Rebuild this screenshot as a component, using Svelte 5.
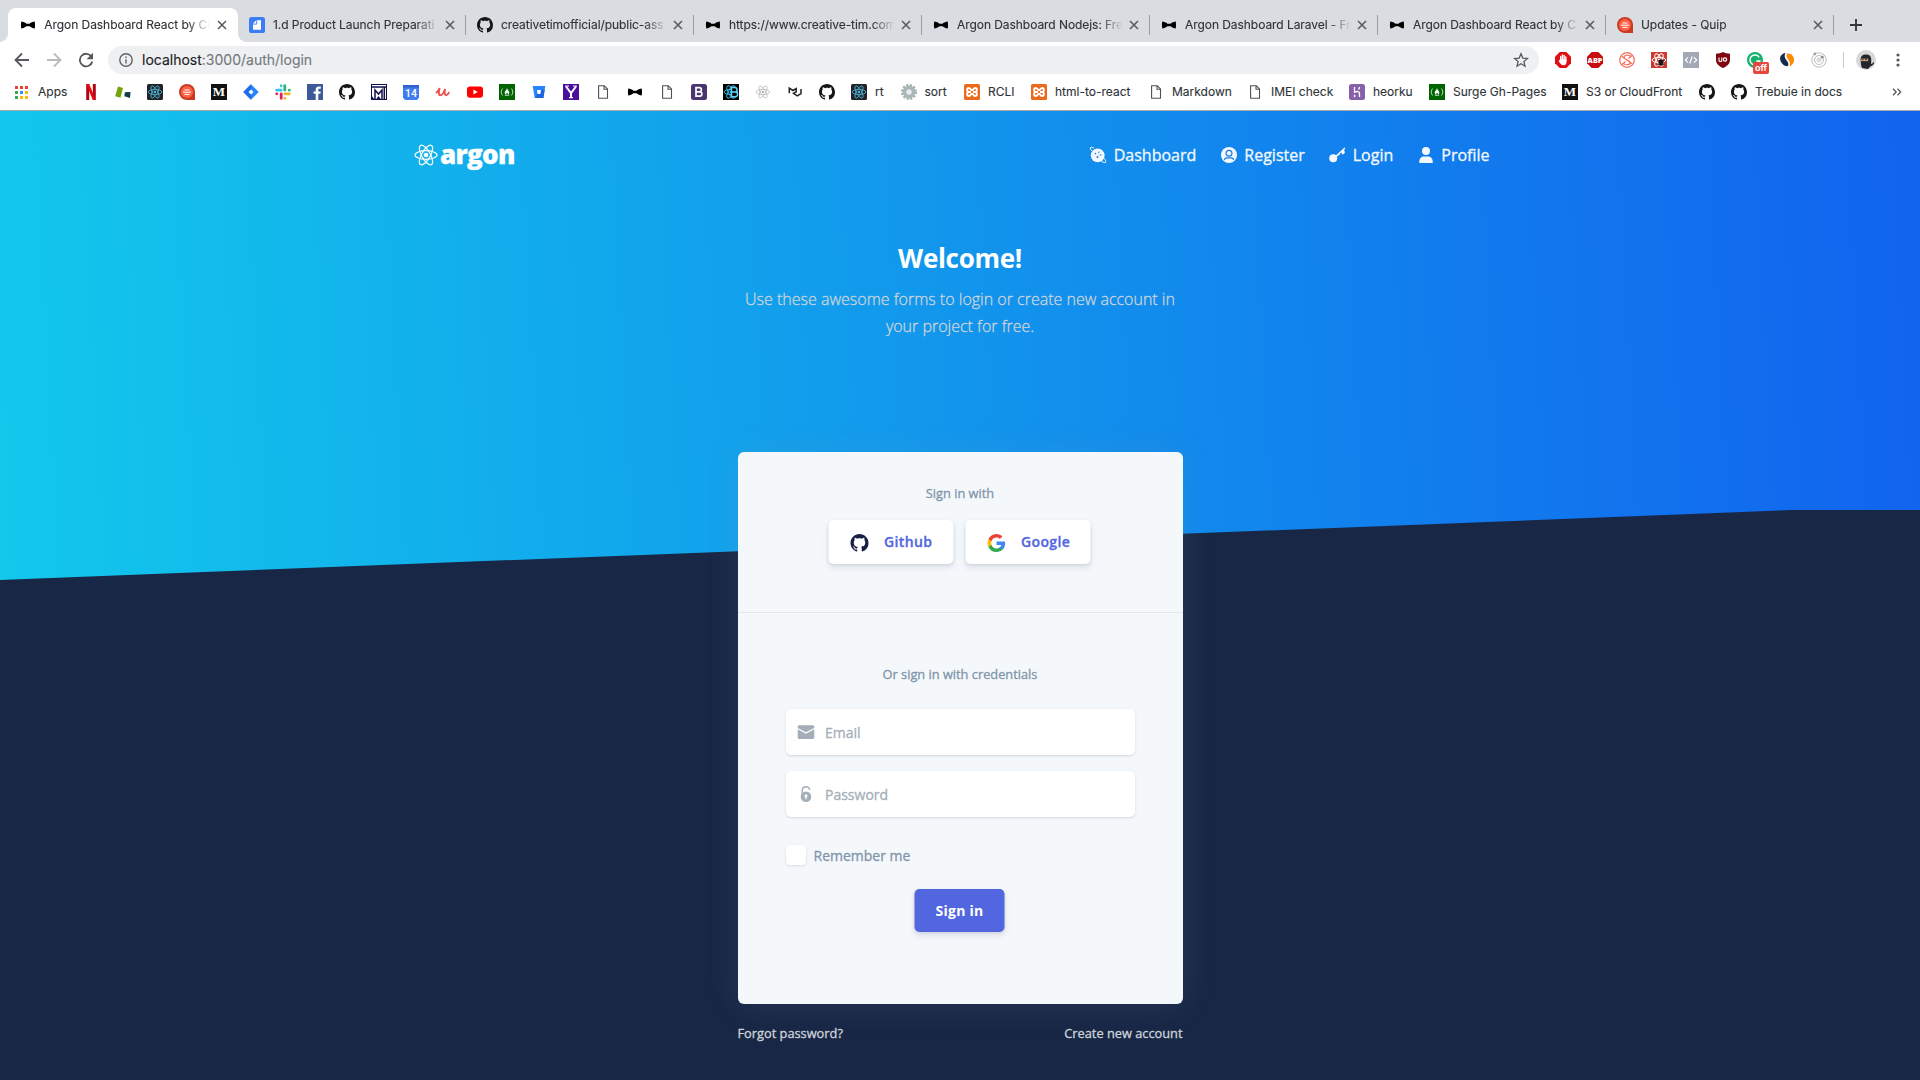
<script>
  const tabs = [
    { icon: 'bow', title: 'Argon Dashboard React by Cr', active: true },
    { icon: 'note', title: '1.d Product Launch Preparati' },
    { icon: 'github', title: 'creativetimofficial/public-ass' },
    { icon: 'bow', title: 'https://www.creative-tim.com' },
    { icon: 'bow', title: 'Argon Dashboard Nodejs: Fre' },
    { icon: 'bow', title: 'Argon Dashboard Laravel - Fr' },
    { icon: 'bow', title: 'Argon Dashboard React by C' },
    { icon: 'quip', title: 'Updates - Quip' }
  ];

  // w is the distance to the next bookmark's icon
  const bookmarks = [
    { icon: 'netflix', w: 32 }, { icon: 'shapes', w: 32 }, { icon: 'react', w: 32 },
    { icon: 'quip', w: 32 }, { icon: 'medium', w: 32 }, { icon: 'jira', w: 32 },
    { icon: 'slack', w: 32 }, { icon: 'facebook', w: 32 }, { icon: 'github', w: 32 },
    { icon: 'mi', w: 32 }, { icon: 'calendar', w: 32 }, { icon: 'udemy', w: 32 },
    { icon: 'youtube', w: 32 }, { icon: 'fcc', w: 32 }, { icon: 'bitbucket', w: 32 },
    { icon: 'yahoo', w: 32 }, { icon: 'page', w: 32 }, { icon: 'bow', w: 32 },
    { icon: 'page', w: 32 }, { icon: 'bootstrap', w: 32 }, { icon: 'reactb', w: 32 },
    { icon: 'reactgray', w: 32 }, { icon: 'mu', w: 32 }, { icon: 'github', w: 32 },
    { icon: 'react', w: 49.5, label: 'rt' }, { icon: 'gear', w: 63.5, label: 'sort' },
    { icon: 'xampp', w: 67, label: 'RCLI' }, { icon: 'xampp', w: 117, label: 'html-to-react' },
    { icon: 'page', w: 99, label: 'Markdown' }, { icon: 'page', w: 102, label: 'IMEI check' },
    { icon: 'heroku', w: 80, label: 'heorku' }, { icon: 'fcc', w: 133, label: 'Surge Gh-Pages' },
    { icon: 'medium', w: 137, label: 'S3 or CloudFront' }, { icon: 'github', w: 32 },
    { icon: 'github', w: 110, label: 'Trebuie in docs' }
  ];

  const extensions = ['hand', 'abp', 'sketch', 'reactbug', 'code', 'ublock', 'grammar', 'swirl', 'orbit'];
  const links = [
    { icon: 'planet', label: 'Dashboard' },
    { icon: 'usercircle', label: 'Register' },
    { icon: 'key', label: 'Login' },
    { icon: 'user', label: 'Profile' }
  ];
  const appColors = ['#ea4335', '#ea4335', '#ea4335', '#34a853', '#4285f4', '#fbbc05', '#34a853', '#fbbc05', '#fbbc05'];
</script>

{#snippet atom(color, width)}
  <g fill="none" stroke={color} stroke-width={width}>
    <ellipse cx="8" cy="8" rx="6.8" ry="2.6" />
    <ellipse cx="8" cy="8" rx="6.8" ry="2.6" transform="rotate(60 8 8)" />
    <ellipse cx="8" cy="8" rx="6.8" ry="2.6" transform="rotate(120 8 8)" />
  </g>
  <circle cx="8" cy="8" r="1.3" fill={color} />
{/snippet}

{#snippet icon(name)}
  <svg class="ico" viewBox="0 0 16 16" aria-hidden="true">
    {#if name === 'bow'}
      <path d="M1.2 4.6c2 .1 3.800 1 5.300 2.200h3c1.500-1.200 3.300-2.100 5.300-2.200.3 2.200.3 4.700 0 6.900-2-.2-3.800-1-5.300-2.200h-3C5 10.500 3.200 11.300 1.200 11.500c-.4-2.200-.4-4.700 0-6.900z" fill="#000" />
    {:else if name === 'note'}
      <rect width="16" height="16" rx="2.6" fill="#3b7df4" />
      <path d="M4 6.500 7.300 3.200H12V12.800H4z" fill="#fff" /><path d="M4 7.100h3.700V3.200" fill="none" stroke="#3b7df4" stroke-width=".9" />
    {:else if name === 'github'}
      <path fill="currentColor" d="M8 0C3.58 0 0 3.58 0 8c0 3.54 2.29 6.53 5.47 7.59.4.07.55-.17.55-.38 0-.19-.01-.82-.01-1.49-2.01.37-2.53-.49-2.69-.94-.09-.23-.48-.94-.82-1.13-.28-.15-.68-.52-.01-.53.63-.01 1.08.58 1.23.82.72 1.21 1.87.87 2.33.66.07-.52.28-.87.51-1.07-1.78-.2-3.64-.89-3.64-3.95 0-.87.31-1.59.82-2.15-.08-.2-.36-1.02.08-2.12 0 0 .67-.21 2.2.82.64-.18 1.32-.27 2-.27.68 0 1.36.09 2 .27 1.53-1.04 2.2-.82 2.2-.82.44 1.1.16 1.92.08 2.12.51.56.82 1.27.82 2.15 0 3.07-1.87 3.75-3.65 3.95.29.25.54.73.54 1.48 0 1.07-.01 1.93-.01 2.2 0 .21.15.46.55.38A8.013 8.013 0 0016 8c0-4.42-3.58-8-8-8z" />
    {:else if name === 'quip'}
      <path d="M8 0a8 8 0 0 1 8 8v8H8A8 8 0 0 1 8 0z" fill="#c93a20" /><circle cx="8" cy="8" r="6" fill="#ff6347" />
      <path d="M5.500 6h5M4 8.200h8M5.500 10.400h5" stroke="#fff" stroke-width="1" />
    {:else if name === 'netflix'}
      <path d="M3.200 0h3v16h-3zM9.800 0h3v16h-3z" fill="#b1060f" /><path d="M3.200 0h3l6.600 16h-3z" fill="#e50914" />
    {:else if name === 'shapes'}
      <path d="M3 2.500 8 4 5.500 13.800.2 12.200z" fill="#76a30d" /><path d="m9.800 8.200 5.700-.3-.5 6-5.600-1.700z" fill="#0f3c46" />
    {:else if name === 'react'}
      <rect width="16" height="16" rx="1.500" fill="#20232a" />{@render atom('#4fb9d4', 0.8)}
    {:else if name === 'reactb'}
      <rect width="16" height="16" fill="#000" />{@render atom('#38b6df', 1)}
      <path d="M8.500 3.500h3.300a2.200 2.200 0 0 1 0 4.500H8.500zm0 4.500h3.800a2.300 2.300 0 0 1 0 4.700H8.500z" fill="#000" stroke="#5fd3f7" stroke-width="1.500" />
    {:else if name === 'reactgray'}
      {@render atom('#b5b5b5', 0.7)}
    {:else if name === 'medium'}
      <rect width="16" height="16" fill="#111" />
      <text x="8" y="12.400" text-anchor="middle" font-family="Liberation Serif, serif" font-size="13" font-weight="700" fill="#fff">M</text>
    {:else if name === 'jira'}
      <path d="M8 .3 15.700 8 8 15.700.3 8z" fill="#2684ff" /><path d="M8 .3v5L5.300 8 8 10.700v5L.3 8z" fill="#1f6bea" /><path d="M8 5.500 10.500 8 8 10.500 5.500 8z" fill="#fff" />
    {:else if name === 'slack'}
      <g stroke-width="2.800" stroke-linecap="round">
        <path d="M6.200 1.700v.1M1.700 6.200h4.500" stroke="#36c5f0" /><path d="M9.800 1.700v4.500M14.300 6.200h.1" stroke="#2eb67d" />
        <path d="M9.800 9.800h4.500M9.800 14.300v.1" stroke="#ecb22e" /><path d="M6.200 9.800v4.500M1.700 9.800h.1" stroke="#e01e5a" />
      </g>
    {:else if name === 'facebook'}
      <rect width="16" height="16" fill="#3c5a99" /><path d="M8.700 16V9.800H6.600V7.400h2.100V5.700c0-2.100 1.300-3.200 3.200-3.200.9 0 1.600.1 1.900.1v2.200h-1.300c-1 0-1.200.5-1.200 1.200v1.400h2.400L13.400 9.800h-2.100V16z" fill="#fff" />
    {:else if name === 'mi'}
      <rect x=".5" y=".5" width="15" height="15" fill="#fff" stroke="#111149" /><path d="M0 3h16M4 15V6l3.500 4L11 6v9M13.300 3v13" fill="none" stroke="#10104d" stroke-width="1.500" /><path d="M0 11l4 5H0zM4.500 16l3-4 3 4z" fill="#10104d" />
    {:else if name === 'calendar'}
      <path d="M0 1h16v12.500L14 16H2L0 13.500z" fill="#3f7cf0" /><path d="M0 1h16v2.500H0z" fill="#2f63ca" />
      <text x="8" y="13" text-anchor="middle" font-family="Roboto, sans-serif" font-size="10.500" font-weight="500" fill="#fff">14</text>
    {:else if name === 'udemy'}
      <path d="M1.500 8.500C3 7 4 5.500 4.600 4c-.8 3.500-1.400 7.300.5 7.300 2.100 0 4-3.300 4.900-6.300-.5 3.500-.5 6.300 1.200 6.300 1.200 0 2-1.200 2.600-2.600" fill="none" stroke="#ec5252" stroke-width="1.900" stroke-linecap="round" />
    {:else if name === 'youtube'}
      <rect y="2.500" width="16" height="11.300" rx="3" fill="#f00" /><path d="m6.400 5.600 4.300 2.500-4.300 2.500z" fill="#fff" />
    {:else if name === 'fcc'}
      <rect width="16" height="16" fill="#006400" /><path d="M3.600 4.500c-1.800 2-1.800 5 0 7M12.400 4.500c1.800 2 1.800 5 0 7M5.800 11.300h4.400" fill="none" stroke="#cfe3cf" stroke-width=".9" /><path d="M8 4c.3 2 2.300 2.800 2.300 4.800 0 1-.6 1.800-1.300 2 .3-.9-.2-1.400-.8-2-.9.500-1.100 1.200-.8 2-1-.3-1.700-1-1.700-2.200C5.700 6.900 7.700 6.300 8 4z" fill="#fff" />
    {:else if name === 'bitbucket'}
      <path d="M1.700 2h12.600l-1.900 12H3.700z" fill="#2684ff" /><path d="M10 6h3.700l-1.300 8H3.900L6.200 10z" fill="#1d66de" /><path d="M6 6h4l-.6 4H6.600z" fill="#fff" />
    {:else if name === 'yahoo'}
      <rect width="16" height="16" fill="#4b0d9c" /><path d="M3 2.500 8 9l5-6.500M8 9v4.500" fill="none" stroke="#fff" stroke-width="2" /><path d="M2 2h4M10 2h4M6 13.600h4" stroke="#fff" stroke-width="1.100" />
    {:else if name === 'page'}
      <path d="M3.600 1.700h5.700l3.200 3.200v9.400H3.600zM9 1.700v3.500h3.500" fill="none" stroke="#4d5156" stroke-width="1.100" />
    {:else if name === 'bootstrap'}
      <rect width="16" height="16" rx="2.500" fill="#4b3470" /><path d="M5 3.700h3.300a2 2 0 0 1 0 4.100H5zm0 4.100h3.700a2.200 2.200 0 0 1 0 4.400H5z" fill="none" stroke="#fff" stroke-width="1.700" />
    {:else if name === 'mu'}
      <path d="M2.300 9.300V4.200l3.700 2.300 3.200-1.900v3.200L6.500 9.300l3.700 2.600 3.800-2.300V4.900" fill="none" stroke="#222" stroke-width="1.500" />
    {:else if name === 'gear'}
      <circle cx="8" cy="8" r="6.500" fill="none" stroke="#9fb0b2" stroke-width="3" stroke-dasharray="2 1.400" /><circle cx="8" cy="8" r="4.500" fill="none" stroke="#a9b7b8" stroke-width="3.800" /><circle cx="8" cy="8" r="2.200" fill="#e8eded" />
    {:else if name === 'xampp'}
      <rect width="16" height="16" rx="1.500" fill="#ec6a1c" /><path d="M7 8H5C2.700 8 2.500 3.900 4.700 3.900c2 0 1.500 2.300 3.300 2.300s1.300-2.300 3.300-2.300C13.500 3.900 13.300 8 11 8H9m2 0c2.300 0 2.500 4.100.3 4.100-2 0-1.500-2.300-3.300-2.300s-1.300 2.300-3.300 2.300C2.500 12.100 2.700 8 5 8" fill="none" stroke="#fff" stroke-width="2" />
    {:else if name === 'heroku'}
      <rect width="16" height="16" rx="2.500" fill="#8660a9" /><path d="M5.500 3v5.200c3-1.200 5-.9 5 1.300V13M10.500 3c0 .9-.3 1.700-1 2.500" fill="none" stroke="#fff" stroke-width="1.300" /><path d="m4.900 10.300 2 1.600-2 1.600z" fill="#fff" />
    {:else if name === 'hand'}
      <path d="M4.700 0h6.600L16 4.700v6.600L11.300 16H4.700L0 11.300V4.700z" fill="#e10f12" /><path d="M5.700 9V4.400M7.400 8V3M9.100 8V3.400M10.800 9V4.900" stroke="#fff" stroke-width="1.400" stroke-linecap="round" /><path d="M5 7.500h6.500V10c0 2.200-1.200 3.300-3 3.300-2.300 0-3.300-2-4.900-4.300z" fill="#fff" />
    {:else if name === 'abp'}
      <path d="M4.700 0h6.600L16 4.700v6.600L11.300 16H4.700L0 11.300V4.700z" fill="#c70d0d" />
      <text x="8" y="10.700" text-anchor="middle" font-family="Open Sans, sans-serif" font-size="7.300" font-weight="800" fill="#fff">ABP</text>
    {:else if name === 'sketch'}
      <circle cx="8" cy="8" r="7.300" fill="#fff" stroke="#f46a58" stroke-width="1.200" /><path d="M11.800 4.500C9.500 2.300 5 3 5 5.500 5 8 11.200 8 11.200 10.500c0 2.500-4.500 3-7 .9M2.600 4.300l10.800 7.600M13 3.500l-3.500 3M6.500 9.500l-3.300 3" fill="none" stroke="#f46a58" stroke-width="1.200" />
    {:else if name === 'reactbug'}
      <rect width="16" height="16" fill="#cb3a2f" />{@render atom('#fff', 1)}
      <ellipse cx="10" cy="10.500" rx="2.500" ry="3.200" fill="#221111" /><path d="M6.500 8l7 5M6.500 13l7-5" stroke="#221111" stroke-width=".8" />
    {:else if name === 'code'}
      <rect width="16" height="16" fill="#a2a9b5" /><path d="M5 5.300 2.300 8 5 10.700M11 5.300 13.700 8 11 10.700M9.200 4.500l-2.400 7" fill="none" stroke="#fff" stroke-width="1.200" />
    {:else if name === 'ublock'}
      <path d="M8 0c2 1.300 4.500 1.700 7 1.700V8c0 4-3.500 6.500-7 8-3.500-1.500-7-4-7-8V1.700C3.500 1.700 6 1.300 8 0z" fill="#800610" /><path d="M4 5.500v3c0 1.300 2.800 1.300 2.800 0v-3" fill="none" stroke="#fff" stroke-width="1.100" /><circle cx="10" cy="7.500" r="1.700" fill="none" stroke="#fff" stroke-width="1.200" />
    {:else if name === 'grammar'}
      <circle cx="8" cy="8" r="8" fill="#15b26b" /><path d="M12.200 5.300A5 5 0 1 0 12.800 9H9.300" fill="none" stroke="#fff" stroke-width="1.500" />
    {:else if name === 'swirl'}
      <path d="M6.500.8C.2 2.500-.7 8.200 4 12.500c1.500 1.400 3.800 1.900 5 1.500 1-2 0-3.800-1.200-5.200C5.500 6.200 5 3.500 6.500.8z" fill="#192b4c" /><path d="M8 1.500c4.500-.6 7.500 3 7 7-.3 2.800-2.300 5-4.400 5.700 1-2.700 0-5-1.500-7C7.700 5.500 7 3.500 8 1.500z" fill="#ff8a00" />
    {:else if name === 'orbit'}
      <g fill="none" stroke="#b9bbbe"><circle cx="8" cy="8" r="7.200" /><circle cx="8" cy="8" r="4.500" /></g><circle cx="8" cy="8" r="2.500" fill="#dadada" /><circle cx="11.200" cy="5" r="1.500" fill="#888" /><circle cx="3.800" cy="1.900" r="1.300" fill="#999" />
    {:else if name === 'google'}
      <path d="M15.700 8.200c0-.6-.1-1.100-.2-1.600H8v3.100h4.300a3.700 3.700 0 0 1-1.600 2.400v2h2.600c1.500-1.400 2.400-3.400 2.400-5.900z" fill="#4285f4" /><path d="M8 16c2.200 0 4-.7 5.300-1.900l-2.600-2c-.7.5-1.600.8-2.700.8-2.100 0-3.900-1.400-4.500-3.300H.9v2.100A8 8 0 0 0 8 16z" fill="#34a853" /><path d="M3.500 9.600a4.800 4.800 0 0 1 0-3.100V4.400H.9a8 8 0 0 0 0 7.200z" fill="#fbbc05" /><path d="M8 3.200c1.200 0 2.200.4 3 1.200l2.300-2.300A8 8 0 0 0 .9 4.400l2.600 2.100C4.100 4.600 5.900 3.200 8 3.200z" fill="#ea4335" />
    {:else if name === 'planet'}
      <circle cx="7.700" cy="8.300" r="6.900" fill="currentColor" /><path d="M4 1.200C2 0 .3-.1.300 1c0 .9.500 1.900 1.400 3M14 11.200c1.700 2 2.200 3.600 1.500 4.200-.7.500-2.400 0-4.200-1.200" fill="none" stroke="currentColor" stroke-width="1" />
      <g fill="#117fec"><circle cx="5.400" cy="6.600" r=".8" /><circle cx="8.800" cy="5.200" r=".7" /><circle cx="10.700" cy="8" r=".8" /><circle cx="7.500" cy="10" r="1" /><circle cx="8.300" cy="7.600" r=".4" /></g>
    {:else if name === 'usercircle'}
      <circle cx="8" cy="8" r="8" fill="currentColor" /><circle cx="8" cy="6.200" r="3.500" fill="#117bec" /><path d="M2.900 12.800c.3-1.800 1.800-2.500 3.100-2.500h4c1.300 0 2.800.7 3.100 2.500A7 7 0 0 1 8 14.600a7 7 0 0 1-5.100-1.800z" fill="#117bec" /><circle cx="8" cy="6.200" r="2.300" fill="currentColor" /><path d="M3.600 13.700c.4-1.500 1.400-2.200 2.400-2.200h4c1 0 2 .7 2.400 2.200-2.400 1.800-6.400 1.800-8.800 0z" fill="currentColor" />
    {:else if name === 'key'}
      <circle cx="4.200" cy="11.300" r="4" fill="currentColor" /><path d="M6.500 8.800 15.800.3l.2 1.600-.9.900.9 3-2.300 2-1.500-2.300-1 .8-.3 1.300-3.600 2.300z" fill="currentColor" />
    {:else if name === 'user'}
      <circle cx="8" cy="4" r="4" fill="currentColor" /><path d="M1.300 16v-1.200C1.300 11.300 3.500 9.600 6 9.600h4c2.500 0 4.700 1.700 4.700 5.200V16z" fill="currentColor" />
    {:else if name === 'mail'}
      <path d="M-.3 3.900v-1C-.3 1.700.3 1.200 1.200 1.200h13.600c.9 0 1.500.5 1.500 1.700v1L8 8.200z" fill="currentColor" /><path d="M-.3 5.300 8 9.700l8.300-4.400v8.300c0 .9-.6 1.400-1.500 1.400H1.200c-.9 0-1.500-.5-1.500-1.400z" fill="currentColor" />
    {:else if name === 'lock'}
      <circle cx="8" cy="10.700" r="5.300" fill="currentColor" /><path d="M4.200 8V4.200a3.800 3.800 0 0 1 7.500-.4" fill="none" stroke="currentColor" stroke-width="1.400" /><circle cx="8" cy="9.700" r="1.500" fill="#fff" /><path d="M7.400 10h1.200v3.200H7.400z" fill="#fff" />
    {/if}
  </svg>
{/snippet}

<div class="screen">
  <header class="chrome">
    <div class="tabs">
      {#each tabs as tab}
        <div class="tab" class:active={tab.active}>
          {@render icon(tab.icon)}
          <span class="title">{tab.title}</span>
          <svg class="close" viewBox="0 0 10 10"><path d="M1 1l8 8M9 1l-8 8" /></svg>
        </div>
      {/each}
      <svg class="plus" viewBox="0 0 12 12"><path d="M6 0v12M0 6h12" /></svg>
    </div>

    <div class="toolbar">
      <div class="history">
        <svg viewBox="0 0 16 16"><path d="M15 8H2M8 1.500 1.500 8 8 14.500" /></svg>
        <svg class="off" viewBox="0 0 16 16"><path d="M1 8h13M8 1.500 14.500 8 8 14.500" /></svg>
        <svg viewBox="0 0 16 16"><path d="M13.500 4.700A6.300 6.300 0 1 0 14.300 9.500" /><path class="solid" d="M15 .8v6.400H8.600z" /></svg>
      </div>
      <div class="address">
        <svg class="info" viewBox="0 0 14 14"><circle cx="7" cy="7" r="6.200" /><path d="M7 6.200v4.200M7 3.500v1.400" /></svg>
        <span class="url"><b>localhost</b>:3000/auth/login</span>
        <svg class="star" viewBox="0 0 16 16"><path d="m8 1.800 1.800 4.300 4.700.4-3.600 3.100 1.100 4.600L8 11.700l-4 2.500 1.100-4.600-3.600-3.100 4.700-.4z" /></svg>
      </div>
      <div class="extensions">
        {#each extensions as name}
          <span class="ext">{@render icon(name)}{#if name === 'grammar'}<em>off</em>{/if}</span>
        {/each}
      </div>
      <i class="rule"></i>
      <svg class="avatar" viewBox="0 0 20 20"><circle cx="10" cy="10" r="10" fill="#d8d8d8" /><path d="M4.500 9C5 5 8 4 11 4.500c3 .4 4.500 2.500 4.300 6L15 14c2-.5 2-2 3-2 .2 2-1.500 3.800-3.500 4.300L12 19l-6-1-1-3z" fill="#23262b" /><path d="M4.700 8.700h7.500v2.400H4.700z" fill="#dba77d" /><path d="M5.500 9.600h2M9 9.600h2" stroke="#333" /></svg>
      <svg class="dots" viewBox="0 0 4 14"><circle cx="2" cy="2" r="1.600" /><circle cx="2" cy="7" r="1.600" /><circle cx="2" cy="12" r="1.600" /></svg>
    </div>

    <div class="bookmarks">
      <div class="apps">
        <span class="grid">{#each appColors as color}<i style="background: {color}"></i>{/each}</span>
        <span class="label">Apps</span>
      </div>
      {#each bookmarks as mark}
        <div class="mark" style="width: {mark.w}px">
          {@render icon(mark.icon)}
          {#if mark.label}<span class="label">{mark.label}</span>{/if}
        </div>
      {/each}
      <svg class="more" viewBox="0 0 10 8"><path d="M1 .8 4.200 4 1 7.200M5.500.8 8.700 4 5.500 7.200" /></svg>
    </div>
  </header>

  <main>
    <svg class="backdrop" viewBox="0 0 1920 70" preserveAspectRatio="none"><path d="M0 70 1792 0H1920V70z" /></svg>
    <nav>
      <div class="brand">
        <svg viewBox="0 0 24 24">
          <g fill="none" stroke="#fff" stroke-width="1.200">
            <ellipse cx="12" cy="12" rx="11" ry="4.300" />
            <ellipse cx="12" cy="12" rx="11" ry="4.300" transform="rotate(60 12 12)" />
            <ellipse cx="12" cy="12" rx="11" ry="4.300" transform="rotate(120 12 12)" />
          </g>
          <circle cx="12" cy="12" r="2.300" fill="#fff" />
        </svg>
        <span>argon</span>
      </div>
      <ul>
        {#each links as link}
          <li>{@render icon(link.icon)}<span>{link.label}</span></li>
        {/each}
      </ul>
    </nav>

    <section class="intro">
      <h1>Welcome!</h1>
      <p>Use these awesome forms to login or create new account in<br />your project for free.</p>
    </section>

    <section class="card">
      <div class="social">
        <small>Sign in with</small>
        <div class="buttons">
          <button class="gh">{@render icon('github')}<span>Github</span></button>
          <button>{@render icon('google')}<span>Google</span></button>
        </div>
      </div>
      <div class="form">
        <small>Or sign in with credentials</small>
        <div class="field">{@render icon('mail')}<span>Email</span></div>
        <div class="field">{@render icon('lock')}<span>Password</span></div>
        <div class="remember"><i></i><span>Remember me</span></div>
        <button class="submit">Sign in</button>
      </div>
    </section>

    <div class="footer-links"><span>Forgot password?</span><span>Create new account</span></div>
  </main>
</div>

<style>
  :global(body) { margin: 0; overflow: hidden; }
  .screen { width: 1920px; height: 1080px; overflow: hidden; display: flex; flex-direction: column; font-family: 'Open Sans', sans-serif; }
  .ico { width: 16px; height: 16px; flex: none; display: block; overflow: visible; }

  .chrome { height: 110px; flex: none; background: #fff; border-bottom: 1px solid #a9aaab; font-family: Inter, Roboto, sans-serif; color: #2f3337; -webkit-text-stroke: .12px; }
  .chrome text { -webkit-text-stroke: 0; }
  .chrome .ico { color: #161616; }
  .tabs { height: 42px; box-sizing: border-box; background: #d9dce1; display: flex; align-items: flex-end; padding: 0 0 0 10px; }
  .tab { position: relative; width: 228px; height: 34px; box-sizing: border-box; flex: none; display: flex; align-items: center; padding: 0 10px 0 11px; }
  .tab:not(.active)::after { content: ''; position: absolute; right: 0; top: 7px; width: 1px; height: 20px; background: #9a9da1; }
  .title { margin-left: 8px; width: 165px; overflow: hidden; white-space: nowrap; font-size: 12px; line-height: 18px; letter-spacing: -0.06px; -webkit-mask-image: linear-gradient(90deg, #000 143px, transparent 166px); mask-image: linear-gradient(90deg, #000 143px, transparent 166px); }
  .close { width: 10px; height: 10px; margin-left: 7.300px; }
  .close path { stroke: #55585c; stroke-width: 1.500; }
  .active { width: 230px; margin-left: -2px; padding-left: 12.300px; background: #fff; border-radius: 8px 8px 0 0; }
  .active .close { margin-left: 8px; }
  .active::before, .active::after { content: ''; position: absolute; bottom: 0; width: 8px; height: 8px; }
  .active::before { left: -8px; background: radial-gradient(circle at 0 0, transparent 7.500px, #fff 8px); }
  .active::after { right: -8px; background: radial-gradient(circle at 100% 0, transparent 7.500px, #fff 8px); }
  .plus { width: 12px; height: 12px; margin: 0 0 11px 16px; }
  .plus path { stroke: #35393d; stroke-width: 1.900; }

  .toolbar { height: 36px; display: flex; align-items: center; }
  .history { display: flex; gap: 16px; padding-left: 14px; width: 94px; }
  .history svg { width: 16px; height: 16px; fill: none; stroke: #55585d; stroke-width: 1.800; }
  .history .off { stroke: #b9bbbe; }
  .history .solid { fill: #55585d; stroke: none; }
  .address { width: 1431px; height: 28px; box-sizing: border-box; padding: 0 10px 0 11px; display: flex; align-items: center; border-radius: 14px; background: #eff0f2; }
  .info { width: 14px; height: 14px; fill: none; stroke: #5f6368; stroke-width: 1.400; }
  .url { margin-left: 9px; flex: 1; font-size: 14px; line-height: 18px; padding-bottom: 1px; color: #75797e; }
  .url b { font-weight: 400; color: #202124; }
  .star { width: 16px; height: 16px; fill: none; stroke: #55585d; stroke-width: 1.300; }
  .extensions { display: flex; gap: 16px; margin-left: 16px; }
  .ext { position: relative; }
  .ext em { position: absolute; left: 6px; top: 10px; width: 16px; height: 12px; border-radius: 2px; background: #e8453c; color: #fff; font: 600 9px/12px Inter, sans-serif; text-align: center; }
  .rule { width: 1px; height: 16px; background: #c6c8ca; margin-left: 16px; }
  .avatar { width: 20px; height: 20px; margin-left: 12px; }
  .dots { width: 4px; height: 14px; margin-left: 20px; fill: #55585d; }

  .bookmarks { height: 28px; display: flex; align-items: center; font-size: 12px; white-space: nowrap; }
  .label { line-height: 16px; padding-bottom: 1px; }
  .apps { width: 68px; padding-left: 15px; display: flex; align-items: center; gap: 10px; }
  .grid { display: grid; grid-template-columns: repeat(3, 3px); gap: 2px; }
  .grid i { height: 3px; }
  .mark { flex: none; display: flex; align-items: center; gap: 8px; }
  .more { width: 10px; height: 8px; margin-left: 51px; fill: none; stroke: #55585d; stroke-width: 1.300; }

  main { position: relative; flex: 1; background: linear-gradient(87deg, #12c8eb 0%, #1163ee 100%) 0 0 / 100% 469px no-repeat #182746; display: flex; flex-direction: column; align-items: center; -webkit-text-stroke: .3px; }
  .backdrop { position: absolute; left: 0; top: 399px; width: 1920px; height: 70px; fill: #182746; }
  nav { width: 1076px; height: 88px; box-sizing: border-box; display: flex; justify-content: space-between; align-items: center; color: #fff; margin-left: -16px; }
  .brand { display: flex; align-items: center; gap: 2px; }
  .brand svg { width: 24px; height: 24px; }
  .brand span { font-size: 26px; line-height: 30px; font-weight: 800; letter-spacing: -.7px; padding-bottom: 2px; }
  nav ul { list-style: none; display: flex; gap: 24px; margin: 0; padding: 0; }
  nav li { display: flex; align-items: center; gap: 8px; font-size: 16px; color: #f4f8fe; }
  nav li span { margin-left: -.5px; margin-right: .5px; }

  .intro { margin-top: 43px; text-align: center; }
  h1 { margin: 0; font-size: 26px; line-height: 32px; font-weight: 700; color: #fff; letter-spacing: -.3px; -webkit-text-stroke: 0; }
  p { margin: 12px 0 0; font-size: 16px; line-height: 27.200px; font-weight: 300; color: #ced4da; }

  .card { position: absolute; left: 738px; top: 341px; width: 445px; height: 552px; border-radius: 6px; background: #f5f8fb; box-shadow: 0 0 32px rgba(136, 152, 170, .15); color: #8094aa; }
  small { font-size: 12.800px; line-height: 20px; margin-right: 1px; }
  .social { height: 161px; box-sizing: border-box; border-bottom: 1px solid #e2e6ea; padding-top: 31px; display: flex; flex-direction: column; align-items: center; }
  .buttons { display: flex; gap: 12px; margin: 17px 1px 0 0; transform: translateX(-.5px); }
  button { width: 125px; height: 44px; box-sizing: border-box; border: 0; border-radius: 5px; padding: 0 0 0 22px; display: flex; align-items: center; background: #fff; color: #5266e0; font: 600 14px 'Open Sans', sans-serif; letter-spacing: .35px; box-shadow: 0 4px 6px rgba(50, 50, 93, .11), 0 1px 3px rgba(0, 0, 0, .08); }
  button .ico { width: 18px; height: 18px; margin-top: 2px; }
  button span { margin-left: 15.500px; padding-bottom: 1px; }
  .gh .ico { color: #172044; }
  .form { padding: 51px 48px 0; display: flex; flex-direction: column; align-items: center; }
  .field { width: 349px; height: 46px; box-sizing: border-box; display: flex; align-items: center; gap: 11.500px; margin-top: 16px; padding-left: 11.500px; border-radius: 5px; background: #fff; box-shadow: 0 1px 3px rgba(50, 50, 93, .15), 0 1px 0 rgba(0, 0, 0, .02); font-size: 14px; color: #a3aeb9; }
  small + .field { margin-top: 25px; }
  .remember { align-self: flex-start; display: flex; align-items: center; gap: 7.500px; margin-top: 28px; height: 20px; font-size: 14px; }
  .remember i { width: 20px; height: 20px; border-radius: 4px; background: #fff; box-shadow: 0 1px 3px rgba(50, 50, 93, .15); }
  .submit { width: 90px; height: 43px; margin: 24px 1px 0 0; padding: 0; justify-content: center; background: #5266e0; color: #fff; letter-spacing: .25px; font-weight: 700; -webkit-text-stroke: 0; transform: translateX(-.5px); }
  .footer-links { position: absolute; left: 737.500px; top: 912px; width: 445px; display: flex; justify-content: space-between; font-size: 12.800px; line-height: 20px; color: #ced4da; }
</style>
